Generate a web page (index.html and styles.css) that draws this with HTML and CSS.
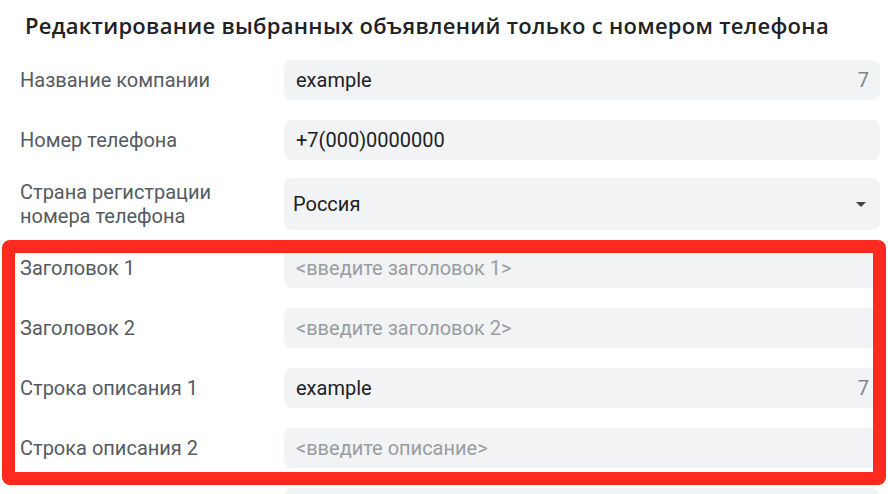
FILE: index.html
```html
<!DOCTYPE html>
<html lang="ru">
<head>
    <meta charset="UTF-8">
    <meta name="viewport" content="width=device-width, initial-scale=1.0">
    <title>Редактирование объявлений</title>
    <link rel="stylesheet" href="styles.css">
</head>
<body>
    <div class="page">
        <h1 class="title">Редактирование выбранных объявлений только с номером телефона</h1>

        <div class="form">
            <div class="row">
                <div class="label">Название компании</div>
                <div class="field"><span class="value">example</span><span class="counter">7</span></div>
            </div>
            <div class="row">
                <div class="label">Номер телефона</div>
                <div class="field"><span class="value">+7(000)0000000</span></div>
            </div>
            <div class="row row-select">
                <div class="label">Страна регистрации<br>номера телефона</div>
                <div class="field select"><span class="value">Россия</span><span class="arrow"></span></div>
            </div>
            <div class="row">
                <div class="label">Заголовок 1</div>
                <div class="field"><span class="placeholder">&lt;введите заголовок 1&gt;</span></div>
            </div>
            <div class="row">
                <div class="label">Заголовок 2</div>
                <div class="field"><span class="placeholder">&lt;введите заголовок 2&gt;</span></div>
            </div>
            <div class="row">
                <div class="label">Строка описания 1</div>
                <div class="field"><span class="value">example</span><span class="counter">7</span></div>
            </div>
            <div class="row">
                <div class="label">Строка описания 2</div>
                <div class="field"><span class="placeholder">&lt;введите описание&gt;</span></div>
            </div>
            <div class="row">
                <div class="label"></div>
                <div class="field"></div>
            </div>
        </div>

        <!-- красная рамка поверх полей -->
        <div class="highlight"></div>
    </div>
</body>
</html>
```

FILE: styles.css
```css
body {
    margin: 0;
    padding: 0;
    background-color: #fff;
    font-family: Roboto, "Liberation Sans", sans-serif;
    overflow: hidden;
}

.page {
    position: relative;
    padding: 0 8px 0 20px;
}

.title {
    margin: 0 0 12px 5px;
    padding-top: 12px;
    font-family: "Open Sans", Roboto, sans-serif;
    font-size: 22px;
    line-height: 26px;
    font-weight: 600;
    letter-spacing: 0.3px;
    color: #202124;
    white-space: nowrap;
}

.form {
    display: flex;
    flex-direction: column;
}

.row {
    display: grid;
    grid-template-columns: 264px 1fr;
    align-items: center;
    padding: 10px 0;
}

.row-select {
    padding: 8px 0;
}

.label {
    font-size: 20px;
    line-height: 24px;
    color: #555a60;
}

.field {
    display: flex;
    align-items: center;
    height: 40px;
    padding: 0 11px 0 12px;
    background-color: #f1f3f4;
    border-radius: 8px;
    font-size: 20px;
}

.field.select {
    height: 52px;
    padding-left: 9px;
    padding-right: 14px;
}

.value {
    flex: 1;
    color: #202124;
}

.placeholder {
    flex: 1;
    color: #9a9da1;
}

.counter {
    color: #80868b;
}

.arrow {
    width: 0;
    height: 0;
    border-left: 5px solid transparent;
    border-right: 5px solid transparent;
    border-top: 5px solid #444;
}

.highlight {
    position: absolute;
    left: 2px;
    top: 240px;
    width: 884px;
    height: 245px;
    box-sizing: border-box;
    border: 13px solid #fe2a1f;
    border-radius: 8px;
}
```
